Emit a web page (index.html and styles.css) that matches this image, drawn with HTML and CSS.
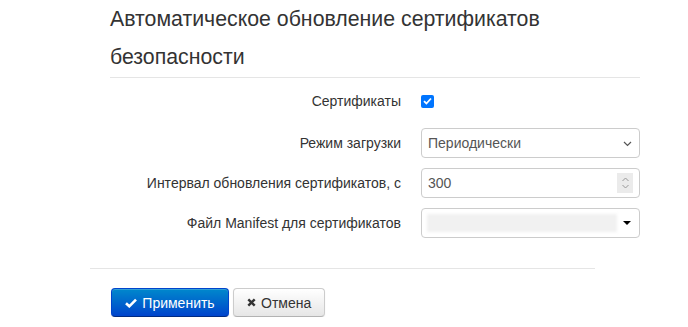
FILE: index.html
```html
<!DOCTYPE html>
<html lang="ru">
<head>
	<meta charset="utf-8">
	<title>Автоматическое обновление сертификатов</title>
	<link rel="stylesheet" href="styles.css">
</head>
<body>
<div id="page">
	<h3 class="legend">Автоматическое обновление сертификатов безопасности</h3>

	<form class="form-horizontal">
		<div class="row row-check">
			<label class="label">Сертификаты</label>
			<div class="control">
				<span class="checkbox">
					<svg width="9" height="8" viewBox="0 0 9 8"><path d="M1 4.2 L3.4 6.5 L8 1.5" fill="none" stroke="#fff" stroke-width="1.8"/></svg>
				</span>
			</div>
		</div>
		<div class="row">
			<label class="label">Режим загрузки</label>
			<div class="control">
				<div class="field">
					<span class="value">Периодически</span>
					<svg class="chevron" width="9" height="6" viewBox="0 0 9 6"><path d="M1 1 L4.5 4.5 L8 1" fill="none" stroke="#555" stroke-width="1.2"/></svg>
				</div>
			</div>
		</div>
		<div class="row">
			<label class="label">Интервал обновления сертификатов, с</label>
			<div class="control">
				<div class="field">
					<span class="value">300</span>
					<span class="spin">
						<svg width="9" height="16" viewBox="0 0 9 16"><path d="M1.5 6 L4.5 3 L7.5 6 M1.5 10 L4.5 13 L7.5 10" fill="none" stroke="#999" stroke-width="1"/></svg>
					</span>
				</div>
			</div>
		</div>
		<div class="row">
			<label class="label">Файл Manifest для сертификатов</label>
			<div class="control">
				<div class="field">
					<span class="blurred"></span>
					<span class="caret"></span>
				</div>
			</div>
		</div>
	</form>

	<div class="form-actions">
		<button class="btn btn-primary" type="button">
			<svg width="12" height="10" viewBox="0 0 12 10"><path d="M1 5.2 L4.3 8.3 L11 1.6" fill="none" stroke="#fff" stroke-width="2.6"/></svg>
			Применить
		</button>
		<button class="btn" type="button">
			<svg width="9" height="9" viewBox="0 0 9 9"><path d="M1.3 1.3 L7.7 7.7 M7.7 1.3 L1.3 7.7" fill="none" stroke="#333" stroke-width="2.4"/></svg>
			Отмена
		</button>
	</div>
</div>
</body>
</html>
```

FILE: styles.css
```css
html { font-family: "Liberation Sans", Arial, sans-serif; color: #333; background-color: white; }
body { margin: 0; }
#page { padding: 0 0 0 90px; }
.legend {
	width: 530px;
	margin: 0 0 0 20px;
	padding: 0;
	font-size: 21.3px;
	font-weight: normal;
	line-height: 38px;
	border-bottom: 1px solid #e5e5e5;
	height: 78px;
	box-sizing: border-box;
}
.form-horizontal { margin: 0 0 0 20px; padding: 16px 0 10px; width: 530px; }
.row { display: flex; align-items: center; gap: 20px; height: 30px; margin-bottom: 10px; font-size: 14px; }
.row:last-child { margin-bottom: 0; }
.row-check { height: 14px; margin-bottom: 20px; }
.label { width: 291px; text-align: right; }
.control { flex: 1; }
.checkbox {
	display: flex; align-items: center; justify-content: center;
	width: 13px; height: 13px;
	background-color: #0075ff;
	border-radius: 2px;
}
.field {
	display: flex; align-items: center;
	height: 30px;
	box-sizing: border-box;
	border: 1px solid #ccc;
	border-radius: 4px;
	padding: 0 6px 0 6px;
	color: #555;
	font-size: 14px;
}
.value { flex: 1; }
.chevron { margin-right: 1px; margin-top: 1px; }
.spin {
	display: flex; align-items: center; justify-content: center;
	width: 16px; height: 20px;
	background-color: #ebebeb;
}
.blurred {
	flex: 1;
	height: 18px;
	margin-left: -1px;
	background-color: #f1f1f1;
	filter: blur(1.5px);
}
.caret {
	width: 0; height: 0;
	margin: 0 2px 0 6px;
	border-left: 4px solid transparent;
	border-right: 4px solid transparent;
	border-top: 4px solid #000;
}
.form-actions {
	width: 505px;
	box-sizing: border-box;
	margin-top: 20px;
	padding-top: 19px;
	border-top: 1px solid #e5e5e5;
	display: flex;
	gap: 4px;
	padding-left: 21px;
}
.btn {
	display: flex; align-items: center; gap: 5px;
	height: 29px;
	padding: 0 13px;
	font-family: "Liberation Sans", Arial, sans-serif;
	font-size: 14px;
	color: #333;
	border: 1px solid #ccc;
	border-bottom-color: #b3b3b3;
	border-radius: 4px;
	background: linear-gradient(#ffffff, #e6e6e6);
	box-shadow: inset 0 1px 0 rgba(255,255,255,.2), 0 1px 2px rgba(0,0,0,.05);
}
.btn-primary {
	width: 118px;
	justify-content: center;
	color: white;
	border-color: #0044cc #0044cc #002a80;
	background: linear-gradient(#0088cc, #0044cc);
}
```
